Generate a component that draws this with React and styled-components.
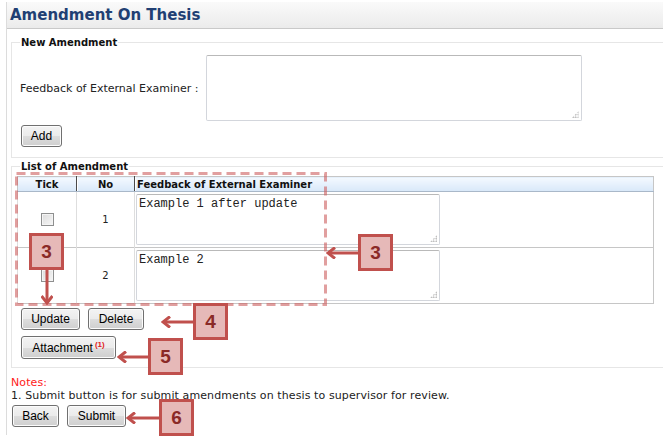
import React from "react";
import styled, { createGlobalStyle } from "styled-components";

const GlobalStyle = createGlobalStyle`
  html, body {
    margin: 0;
    padding: 0;
    background: #ffffff;
    overflow: hidden;
  }
  body {
    font-family: "DejaVu Sans", Verdana, sans-serif;
    font-size: 11px;
    color: #222;
  }
`;

const Stage = styled.div`
  position: relative;
  width: 663px;
  height: 442px;
  overflow: hidden;
`;

const Page = styled.div`
  margin: 2px 0 0 6px;
  width: 700px;
  height: 433px;
  border-left: 1px solid #dcdcdc;
`;

const TitleBar = styled.div`
  height: 25px;
  display: flex;
  align-items: center;
  padding: 0 0 1px 3px;
  background: linear-gradient(#fafafa, #ebebeb);
  border-bottom: 1px solid #c9c9c9;
  font-size: 15px;
  font-weight: bold;
  color: #213f73;
`;

const Body = styled.div`
  padding: 8px 0 0 4px;
`;

const Fieldset = styled.fieldset`
  margin: ${(p) => p.$top || 0}px 0 0 0;
  padding: 0 8px ${(p) => p.$bottom || 10}px ${(p) => p.$left || 8}px;
  border: 1px solid #e6e6e6;
  border-right: none;
`;

const Legend = styled.legend`
  margin-left: ${(p) => p.$indent || 0}px;
  padding: 0 1px;
  font-weight: bold;
  font-size: 10px;
  color: #111;
`;

const FormRow = styled.div`
  display: flex;
  align-items: center;
  gap: 7px;
  margin-top: 7px;
`;

const Label = styled.span`
  color: #222;
`;

const TextBox = styled.div`
  position: relative;
  box-sizing: border-box;
  width: ${(p) => p.$w}px;
  height: ${(p) => p.$h}px;
  border: 1px solid #d3d6dc;
  border-top-color: #b9b9b9;
  border-radius: 2px;
  background: #fff;
  padding: 2px 2px;
  font-family: "Liberation Mono", "Courier New", monospace;
  font-size: 12px;
  color: #222;
  white-space: pre;

  &::after {
    content: "";
    position: absolute;
    right: 2px;
    bottom: 2px;
    width: 7px;
    height: 7px;
    background:
      radial-gradient(circle, #a8a8a8 0.7px, transparent 1px) 0 0 / 2.5px 2.5px;
    clip-path: polygon(100% 0, 100% 100%, 0 100%);
  }
`;

const ButtonRow = styled.div`
  display: flex;
  gap: 8px;
  margin: ${(p) => p.$m || "0"};
`;

const Button = styled.button`
  box-sizing: border-box;
  height: ${(p) => p.$h || 22}px;
  width: ${(p) => p.$w}px;
  padding: 0;
  border: 1px solid #707070;
  border-radius: 3px;
  background: linear-gradient(#f3f3f3 0%, #ebebeb 50%, #dddddd 51%, #cfcfcf 100%);
  font-family: "Liberation Sans", Arial, sans-serif;
  font-size: 12px;
  color: #000;
  box-shadow: inset 0 0 0 1px #fcfcfc;
`;

const Count = styled.sup`
  color: #e02020;
  font-size: 8px;
  font-weight: bold;
  margin-left: 2px;
  vertical-align: 5px;
  line-height: 0;
`;

const Grid = styled.table`
  width: 637px;
  margin-top: 4px;
  border-collapse: collapse;
  border: 1px solid #c6c6c6;
  table-layout: fixed;
`;

const Th = styled.th`
  width: ${(p) => (p.$w ? `${p.$w}px` : "auto")};
  height: 14px;
  padding: 0 0 0 ${(p) => (p.$left ? 2 : 0)}px;
  background: linear-gradient(#f4f9ff, #d8e8f9);
  border-bottom: 1px solid #a9b8c9;
  border-left: 1px solid #4a4a4a;
  box-shadow: inset 1px 0 #ffffff;
  font-size: 10px;
  font-weight: bold;
  color: #111;
  text-align: ${(p) => (p.$left ? "left" : "center")};
  white-space: nowrap;

  &:first-child {
    border-left: none;
    box-shadow: none;
  }
`;

const Td = styled.td`
  border-top: 1px solid #c6c6c6;
  border-left: 1px solid #dedede;
  text-align: ${(p) => (p.$left ? "left" : "center")};
  vertical-align: middle;
  font-size: 10px;
  padding: ${(p) => (p.$left ? "2px 1px 2px 1px" : "0")};
`;

const Check = styled.span`
  display: inline-block;
  width: 11px;
  height: 11px;
  border: 1px solid #8e8f8f;
  background: linear-gradient(135deg, #dcdcdc, #f6f6f6);
  box-shadow: inset 0 0 0 1px #f4f4f4;
  vertical-align: middle;
`;

const Notes = styled.div`
  margin: 8px 0 0 0;
  font-size: 11px;
  line-height: 13px;
  letter-spacing: 0.1px;
  color: #222;
`;

const NotesTitle = styled.div`
  color: #ff1a1a;
`;

/* annotation layer drawn on top of the screenshot */

const Dashed = styled.svg`
  position: absolute;
  left: 15px;
  top: 172px;
  pointer-events: none;
`;

const LeftCallout = styled.div`
  position: absolute;
  left: ${(p) => p.$x}px;
  top: ${(p) => p.$y}px;
  display: flex;
  align-items: center;
`;

const DownCallout = styled.div`
  position: absolute;
  left: ${(p) => p.$x}px;
  top: ${(p) => p.$y}px;
  display: flex;
  flex-direction: column;
  align-items: center;
`;

const Badge = styled.div`
  width: 35px;
  height: 37px;
  box-sizing: border-box;
  display: flex;
  align-items: center;
  justify-content: center;
  background: #e6b9b8;
  border: 3px solid #c0504d;
  font-family: "Liberation Sans", Arial, sans-serif;
  font-weight: bold;
  font-size: 19px;
  color: #8a2a27;
`;

function ArrowLeft({ length }) {
  return (
    <svg width={length} height={12} style={{ display: "block" }}>
      <line x1={2} y1={6} x2={length} y2={6} stroke="#c0504d" strokeWidth={3} />
      <polyline points="9,0.5 2,6 9,11.5" fill="none" stroke="#c0504d" strokeWidth={3} />
    </svg>
  );
}

function ArrowDown({ length }) {
  return (
    <svg width={12} height={length} style={{ display: "block" }}>
      <line x1={6} y1={0} x2={6} y2={length - 2} stroke="#c0504d" strokeWidth={3} />
      <polyline
        points={`0.5,${length - 9} 6,${length - 2} 11.5,${length - 9}`}
        fill="none"
        stroke="#c0504d"
        strokeWidth={3}
      />
    </svg>
  );
}

const rows = [
  { no: 1, text: "Example 1 after update" },
  { no: 2, text: "Example 2" },
];

const pointers = [
  { n: 3, x: 326, y: 234, len: 32 },
  { n: 4, x: 161, y: 303, len: 32 },
  { n: 5, x: 117, y: 338, len: 31 },
  { n: 6, x: 126, y: 399, len: 33 },
];

export default function App() {
  return (
    <Stage>
      <GlobalStyle />
      <Page>
        <TitleBar>Amendment On Thesis</TitleBar>
        <Body>
          <Fieldset $bottom={10}>
            <Legend>New Amendment</Legend>
            <FormRow>
              <Label>Feedback of External Examiner :</Label>
              <TextBox $w={376} $h={66} />
            </FormRow>
            <ButtonRow $m="4px 0 0 1px">
              <Button $w={41}>Add</Button>
            </ButtonRow>
          </Fieldset>

          <Fieldset $top={3} $left={5} $bottom={8}>
            <Legend $indent={3}>List of Amendment</Legend>
            <Grid>
              <thead>
                <tr>
                  <Th $w={58}>Tick</Th>
                  <Th $w={57}>No</Th>
                  <Th $left>Feedback of External Examiner</Th>
                </tr>
              </thead>
              <tbody>
                {rows.map((r) => (
                  <tr key={r.no}>
                    <Td>
                      <Check />
                    </Td>
                    <Td>{r.no}</Td>
                    <Td $left>
                      <TextBox $w={304} $h={51}>{r.text}</TextBox>
                    </Td>
                  </tr>
                ))}
              </tbody>
            </Grid>
            <ButtonRow $m="4px 0 0 4px">
              <Button $w={59}>Update</Button>
              <Button $w={56}>Delete</Button>
            </ButtonRow>
            <ButtonRow $m="6px 0 0 4px">
              <Button $w={95} $h={23}>
                Attachment<Count>(1)</Count>
              </Button>
            </ButtonRow>
          </Fieldset>

          <Notes>
            <NotesTitle>Notes:</NotesTitle>
            <div>1. Submit button is for submit amendments on thesis to supervisor for review.</div>
          </Notes>
          <ButtonRow $m="3px 0 0 1px">
            <Button $w={47}>Back</Button>
            <Button $w={59}>Submit</Button>
          </ButtonRow>
        </Body>
      </Page>

      <Dashed width={313} height={135}>
        <rect
          x={1.5}
          y={1.5}
          width={309}
          height={131}
          fill="none"
          stroke="rgba(205, 95, 95, 0.6)"
          strokeWidth={3}
          strokeDasharray="9 5"
        />
      </Dashed>
      <DownCallout $x={29} $y={233}>
        <Badge>3</Badge>
        <ArrowDown length={35} />
      </DownCallout>
      {pointers.map((p) => (
        <LeftCallout key={p.n} $x={p.x} $y={p.y}>
          <ArrowLeft length={p.len} />
          <Badge>{p.n}</Badge>
        </LeftCallout>
      ))}
    </Stage>
  );
}
